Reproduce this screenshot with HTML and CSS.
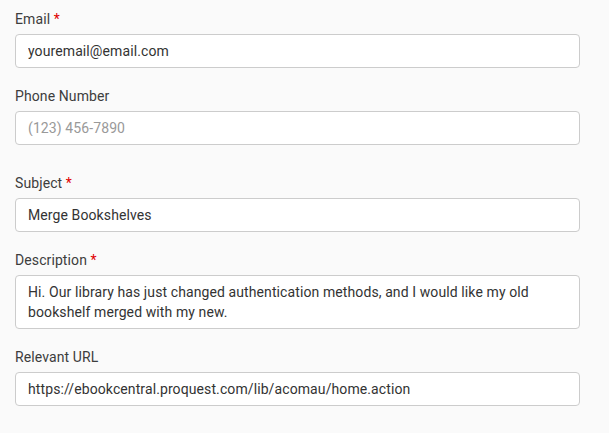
FILE: index.html
```html
<!DOCTYPE html>
<html lang="en">
<head>
<meta charset="utf-8">
<title>Contact form</title>
<link rel="stylesheet" href="styles.css">
</head>
<body>
<form class="form">
  <div class="group">
    <label class="label" for="email">Email <span class="req">*</span></label>
    <input class="control" id="email" type="text" value="youremail@email.com">
  </div>
  <div class="group group-extra">
    <label class="label" for="phone">Phone Number</label>
    <input class="control" id="phone" type="text" placeholder="(123) 456-7890">
  </div>
  <div class="group">
    <label class="label" for="subject">Subject <span class="req">*</span></label>
    <input class="control" id="subject" type="text" value="Merge Bookshelves">
  </div>
  <div class="group">
    <label class="label" for="desc">Description <span class="req">*</span></label>
    <textarea class="control area" id="desc" rows="2">Hi. Our library has just changed authentication methods, and I would like my old
bookshelf merged with my new.</textarea>
  </div>
  <div class="group">
    <label class="label" for="url">Relevant URL</label>
    <input class="control" id="url" type="text" value="https://ebookcentral.proquest.com/lib/acomau/home.action">
  </div>
</form>
</body>
</html>
```
FILE: styles.css
```css
html, body {
  margin: 0;
  padding: 0;
  background: #fafafa;
}
body {
  font-family: Roboto, "Liberation Sans", sans-serif;
  font-size: 14px;
  line-height: 20px;
  letter-spacing: 0.1px;
  color: #333;
}
.form {
  display: flex;
  flex-direction: column;
  gap: 18px;
  padding: 9px 0 0 15px;
  width: 565px;
}
.group {
  display: flex;
  flex-direction: column;
}
.group-extra {
  margin-bottom: 10px;
}
.label {
  display: block;
  height: 20px;
  margin-bottom: 5px;
  color: #3d3d3d;
}
.req {
  color: #e00000;
}
.control {
  box-sizing: border-box;
  display: block;
  width: 100%;
  height: 34px;
  margin: 0;
  padding: 6px 12px;
  font-family: Roboto, "Liberation Sans", sans-serif;
  font-size: 14px;
  line-height: 20px;
  letter-spacing: 0.1px;
  color: #333;
  background: #fff;
  border: 1px solid #ccc;
  border-radius: 4px;
  outline: none;
}
.control::placeholder {
  color: #999;
  opacity: 1;
}
.area {
  height: 54px;
  resize: none;
  overflow: hidden;
}
```
